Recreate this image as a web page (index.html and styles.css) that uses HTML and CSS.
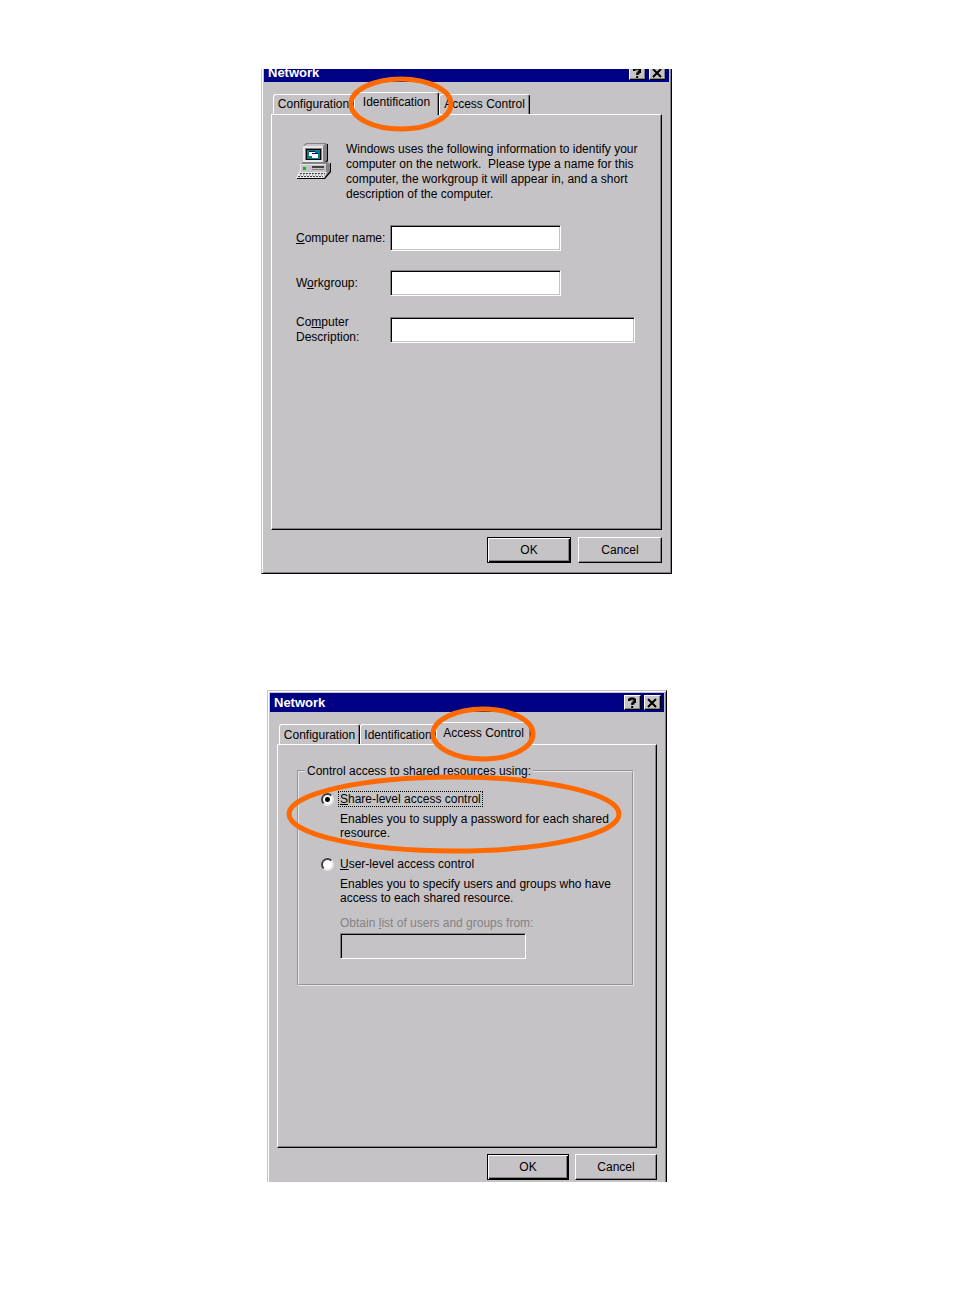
FILE: index.html
```
<!DOCTYPE html>
<html lang="en">
<head>
  <meta charset="UTF-8">
  <title>Network</title>
  <meta name="viewport" content="width=device-width, initial-scale=1.0">
  <link rel="stylesheet" href="styles.css">
</head>

<body>

<!-- Identification tab -->
<section class="figure">
  <div class="dialog cut-top">
    <header class="titlebar">
      <h2>Network</h2>
      <button class="cap" aria-label="Help"><svg viewBox="0 0 14 12"><path d="M4 4V2.500H5.500V1.500H8.500V2.500H10V5H8.500V6.500H7.200V8M7.200 9V11" /></svg></button>
      <button class="cap" aria-label="Close"><svg viewBox="0 0 14 12"><path d="M3 2L11 10M11 2L3 10" /></svg></button>
    </header>
    <nav class="tabs">
      <button class="tab">Configuration</button>
      <button class="tab active">Identification
        <svg class="ring ring-tab" viewBox="0 0 108 56"><ellipse cx="54" cy="28" rx="50" ry="25" /></svg>
      </button>
      <button class="tab">Access Control</button>
    </nav>
    <main class="panel ident">
      <div class="info">
        <svg class="pc" viewBox="1 0 36 38">
          <path fill="#848284" d="M8 4L11 1H31L32 2V18L29 21H8z" />
          <path fill="#000" d="M32 2H33V19L30 22H29V21L32 18z" />
          <path fill="#e7e7e7" d="M8 4H28V20H8z" />
          <path fill="#c6c3c6" d="M9 4L12 2H30L28 4z" />
          <path fill="#848284" d="M10 6H27V18H10z" />
          <path fill="#000" d="M11 7H26V18H11z" />
          <path fill="#008284" d="M12 8H25V17H12z" />
          <path fill="#fff" d="M14 9H20V14H14zM17 11H23V16H17z" />
          <path fill="#000084" d="M14 9H20V10H14zM17 11H23V12H17z" />
          <path fill="#848284" d="M5 23L8 20H32L35 22V29L31 33H5z" />
          <path fill="#000" d="M35 21H36V30L30 37H2V36H29L35 29z" />
          <path fill="#e7e7e7" d="M5 22H31V31H5z" />
          <path fill="#c6c3c6" d="M6 23H31V30H6z" />
          <path fill="#00c300" d="M8 25H11V28H8z" />
          <path fill="#424142" d="M17 24H29V26H17z" />
          <path fill="#848284" d="M17 27H29V28H17z" />
          <path fill="#e7e7e7" d="M4 30H32L29 36H1z" />
          <path stroke="#424142" fill="none" stroke-dasharray="2 1" d="M5 31.500H30M3 34.500H28" />
          <path stroke="#848284" fill="none" stroke-dasharray="1 2" d="M5 33H30" />
        </svg>
        <p>Windows uses the following information to identify your<br>computer on the network.&nbsp; Please type a name for this<br>computer, the workgroup it will appear in, and a short<br>description of the computer.</p>
      </div>
      <div class="fields">
        <label for="computerName"><u>C</u>omputer name:</label>
        <input type="text" id="computerName" class="short">
        <label for="workgroup">W<u>o</u>rkgroup:</label>
        <input type="text" id="workgroup" class="short">
        <label for="description">Co<u>m</u>puter<br>Description:</label>
        <input type="text" id="description">
      </div>
    </main>
    <footer class="actions">
      <button class="btn default">OK</button>
      <button class="btn">Cancel</button>
    </footer>
  </div>
</section>

<!-- Access Control tab -->
<section class="figure narrow">
  <div class="dialog cut-bottom">
    <header class="titlebar">
      <h2>Network</h2>
      <button class="cap" aria-label="Help"><svg viewBox="0 0 14 12"><path d="M4 4V2.500H5.500V1.500H8.500V2.500H10V5H8.500V6.500H7.200V8M7.200 9V11" /></svg></button>
      <button class="cap" aria-label="Close"><svg viewBox="0 0 14 12"><path d="M3 2L11 10M11 2L3 10" /></svg></button>
    </header>
    <nav class="tabs">
      <button class="tab">Configuration</button>
      <button class="tab">Identification</button>
      <button class="tab active">Access Control
        <svg class="ring ring-tab" viewBox="0 0 108 56"><ellipse cx="54" cy="28" rx="50" ry="25" /></svg>
      </button>
    </nav>
    <main class="panel access">
      <fieldset class="group">
        <legend>Control access to shared resources using:</legend>
        <div class="option">
          <input type="radio" name="access" id="shareLevel" checked>
          <label for="shareLevel" class="focused"><u>S</u>hare-level access control</label>
          <p>Enables you to supply a password for each shared<br>resource.</p>
          <svg class="ring ring-option" viewBox="0 0 336 80"><ellipse cx="168" cy="40" rx="165" ry="37" /></svg>
        </div>
        <div class="option">
          <input type="radio" name="access" id="userLevel">
          <label for="userLevel"><u>U</u>ser-level access control</label>
          <p>Enables you to specify users and groups who have<br>access to each shared resource.</p>
        </div>
        <div class="source">
          <label for="source">Obtain <u>l</u>ist of users and groups from:</label>
          <input type="text" id="source" disabled>
        </div>
      </fieldset>
    </main>
    <footer class="actions">
      <button class="btn default">OK</button>
      <button class="btn">Cancel</button>
    </footer>
  </div>
</section>

</body>
</html>
```

FILE: styles.css
```
* {margin:0;padding:0;box-sizing:border-box}
body {
  background: #fff;
  color: #000;
  font-family: "Liberation Sans", Arial, sans-serif;
  font-size: 12px;
  line-height: 15px;
  padding: 69px 20px 40px 0;
  display: flex;
  flex-direction: column;
  align-items: center;
  gap: 116px;
}
button, input {font: inherit;color: inherit;}

.figure {
  width: 100%;
  max-width: 412px;
  overflow: hidden;
}
.figure.narrow {
  max-width: 400px;
  line-height: 14px;
}
.dialog {
  background: #c6c3c6;
  border: 1px solid;
  border-color: #c6c3c6 #000 #000 #c6c3c6;
  box-shadow: inset 1px 1px #fff, inset -1px -1px #848284;
  padding: 2px 9px 10px;
}
.cut-top {margin: -9px 1px 0 0;}
.cut-bottom {margin-bottom: -9px;}

.titlebar {
  display: flex;
  align-items: center;
  height: 19px;
  margin: 0 -7px;
  padding: 0 3px 0 4px;
  background: #000084;
  color: #fff;
}
.titlebar h2 {
  flex: 1;
  font-size: 13px;
}
.cap {
  width: 17px;
  height: 15px;
  margin-left: 3px;
  background: #c6c3c6;
  border: 1px solid;
  border-color: #fff #000 #000 #fff;
  box-shadow: inset -1px -1px #848284;
}
.cap svg {
  display: block;
  width: 14px;
  height: 12px;
  fill: none;
  stroke: #000;
  stroke-width: 2;
}

.tabs {
  display: flex;
  align-items: flex-end;
  height: 32px;
  padding-left: 2px;
}
.tab {
  height: 20px;
  width: 81px;
  background: #c6c3c6;
  border: 1px solid #fff;
  border-bottom: 0;
  border-right-color: #000;
  border-radius: 3px 3px 0 0;
  box-shadow: inset -1px 0 #848284;
  white-space: nowrap;
}
.tab:nth-child(2) {width: 85px;}
.tab:nth-child(3) {width: 91px;}
.narrow .tab:nth-child(2) {width: 76px;}
.narrow .tab:nth-child(3) {width: 95px;}
.tab.active {
  position: relative;
  z-index: 1;
  height: 23px;
  margin-bottom: -1px;
  padding-bottom: 3px;
}

.panel {
  border: 1px solid;
  border-color: #fff #000 #000 #fff;
  box-shadow: inset -1px -1px #848284;
}
.ident {
  min-height: 416px;
  padding: 27px 26px 27px 24px;
}
.info {
  display: flex;
  gap: 14px;
}
.info p {white-space: nowrap;}
.pc {
  flex: none;
  width: 36px;
  height: 38px;
}
.fields {
  display: grid;
  grid-template-columns: 94px 1fr;
  row-gap: 19px;
  align-items: center;
  margin-top: 23px;
}
input[type=text] {
  width: 100%;
  height: 26px;
  padding: 0 4px;
  background: #fff;
  border: 1px solid;
  border-color: #848284 #fff #fff #848284;
  box-shadow: inset 1px 1px #000, inset -1px -1px #c6c3c6;
}
input[type=text].short {width: 171px;}
input[type=text]:disabled {background: #c6c3c6;}

.access {
  min-height: 404px;
  padding: 19px 22px 19px 19px;
}
.group {
  min-height: 222px;
  padding: 14px 6px 20px 22px;
  border: 2px groove #e7e7e7;
}
.group legend {
  margin-left: -16px;
  padding: 0 2px;
}
.option {
  position: relative;
  display: grid;
  grid-template-columns: 18px 1fr;
  align-items: center;
  row-gap: 6px;
  margin-bottom: 17px;
}
.option label {
  justify-self: start;
  padding: 0 1px;
  white-space: nowrap;
}
.option p {
  grid-column: 2;
  padding-left: 1px;
  white-space: nowrap;
}
.focused {outline: 1px dotted #000;}
input[type=radio] {
  appearance: none;
  width: 13px;
  height: 13px;
  background: #fff;
  border: 2px solid;
  border-color: #424142 #e7e7e7 #e7e7e7 #424142;
  border-radius: 50%;
}
input[type=radio]:checked {
  background: radial-gradient(circle, #000 2px, #fff 3px);
}
.option + .option {margin-bottom: 11px;}
.source {
  width: 205px;
  padding-left: 19px;
  color: #848284;
}
.source label {
  display: block;
  margin-bottom: 3px;
  white-space: nowrap;
}

.actions {
  display: flex;
  justify-content: flex-end;
  gap: 7px;
  margin-top: 7px;
}
.btn {
  width: 84px;
  height: 26px;
  background: #c6c3c6;
  border: 1px solid;
  border-color: #fff #000 #000 #fff;
  box-shadow: inset -1px -1px #848284;
}
.btn.default {
  border: 1px solid #000;
  box-shadow: inset 1px 1px #fff, inset -1px -1px #000, inset -2px -2px #848284;
}
.narrow .actions {
  gap: 6px;
  margin-top: 6px;
}
.narrow .btn {width: 82px;}

/* orange markers over the dialog */
.ring {
  position: absolute;
  z-index: 2;
  fill: none;
  stroke: #ff6900;
  stroke-width: 5;
  pointer-events: none;
}
.ring-tab {
  width: 108px;
  height: 56px;
  top: -17px;
  left: -8px;
}
.ring-option {
  width: 336px;
  height: 80px;
  top: -18px;
  left: -35px;
}
```
